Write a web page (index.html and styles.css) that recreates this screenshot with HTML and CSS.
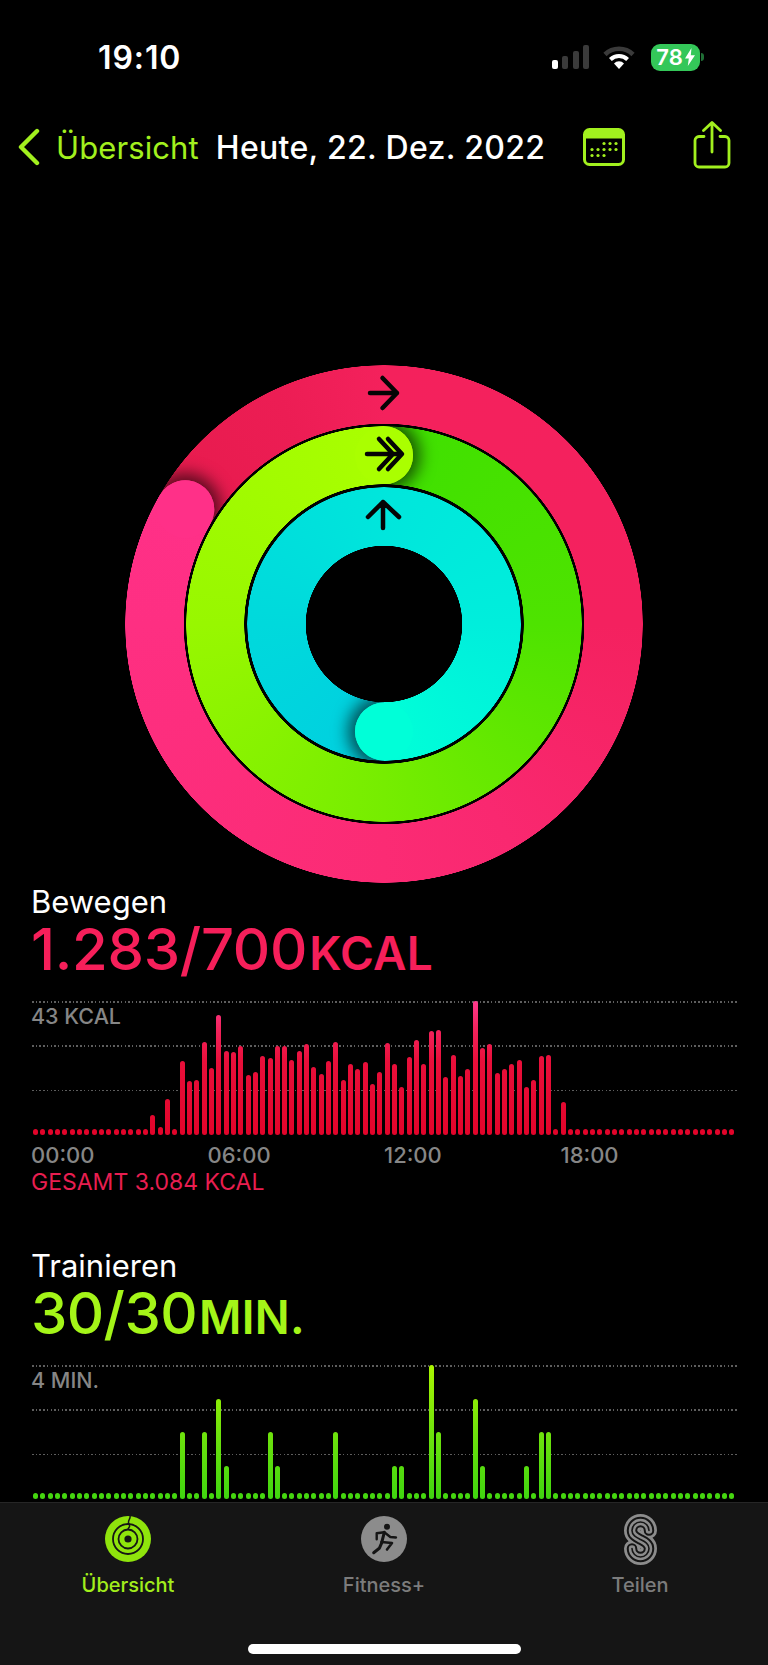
FILE: index.html
```html
<!DOCTYPE html>
<html lang="de">
<head>
  <meta charset="UTF-8" />
  <title>Aktivität</title>
  <link rel="stylesheet" href="styles.css">
</head>
<body>
  <div class="screen">
    <div class="content">
      <!-- Status bar -->
      <div class="status">
        <span class="time">19:10</span>
        <div class="signal">
          <i class="on s1"></i><i class="s2"></i><i class="s3"></i><i class="s4"></i>
        </div>
        <svg class="wifi" viewBox="0 0 32 24">
          <path d="M2 9.5a20 20 0 0 1 28 0" fill="none" stroke="#3a3a3a" stroke-width="4.6"/>
          <path d="M7.4 14.5a12.4 12.4 0 0 1 17.2 0" fill="none" stroke="#fff" stroke-width="4"/>
          <path d="M16 24l-5-5.6a7 7 0 0 1 10 0z" fill="#fff"/>
        </svg>
        <div class="battery">
          <div class="battery-body">
            <span>78</span>
            <svg viewBox="0 0 10 18"><path d="M6.5 0L0 10.400h3.800L2.800 18 10 7.200H5.800z" fill="#fff"/></svg>
          </div>
          <i class="battery-nub"></i>
        </div>
      </div>

      <!-- Nav -->
      <div class="nav">
        <svg class="chevron" viewBox="0 0 22 38"><path d="M19 3L3 19l16 16" fill="none" stroke="#a2f01e" stroke-width="4.4" stroke-linecap="round" stroke-linejoin="round"/></svg>
        <span class="back">Übersicht</span>
        <span class="nav-title">Heute, 22. Dez. 2022</span>
        <svg class="calendar" viewBox="0 0 42 38">
          <rect x="1.500" y="1.500" width="39" height="35" rx="5" fill="none" stroke="#a2f01e" stroke-width="3"/>
          <path d="M1.500 10V6.500a5 5 0 0 1 5-5h29a5 5 0 0 1 5 5V10z" fill="#a2f01e" stroke="#a2f01e"/>
          <g fill="#a2f01e">
            <circle cx="21" cy="15.500" r="1.600"/><circle cx="27" cy="15.500" r="1.600"/><circle cx="33" cy="15.500" r="1.600"/>
            <circle cx="9" cy="21.500" r="1.600"/><circle cx="15" cy="21.500" r="1.600"/><circle cx="21" cy="21.500" r="1.600"/><circle cx="27" cy="21.500" r="1.600"/><circle cx="33" cy="21.500" r="1.600"/>
            <circle cx="9" cy="27.500" r="1.600"/><circle cx="15" cy="27.500" r="1.600"/><circle cx="21" cy="27.500" r="1.600"/>
          </g>
        </svg>
        <svg class="share" viewBox="0 0 38 48">
          <path d="M11 15.500H6a4 4 0 0 0-4 4V42a4 4 0 0 0 4 4h26a4 4 0 0 0 4-4V19.500a4 4 0 0 0-4-4h-5" fill="none" stroke="#a2f01e" stroke-width="2.800" stroke-linecap="round"/>
          <path d="M19 31V2M10.500 9.500L19 1.500l8.500 8" fill="none" stroke="#a2f01e" stroke-width="2.800" stroke-linecap="round" stroke-linejoin="round"/>
        </svg>
      </div>

      <!-- Activity rings -->
      <div class="rings">
        <div class="ring ring-red">
          <div class="ring-base"></div>
          <div class="cap-shadow"></div>
          <div class="ring-top"></div>
          <div class="cap"></div>
        </div>
        <div class="ring ring-green">
          <div class="ring-base"></div>
          <div class="cap-shadow"></div>
          <div class="ring-top"></div>
          <div class="cap"></div>
        </div>
        <div class="ring ring-cyan">
          <div class="ring-base"></div>
          <div class="cap-shadow"></div>
          <div class="ring-top"></div>
          <div class="cap"></div>
        </div>
        <svg class="ring-arrows" viewBox="0 0 518 518">
          <path d="M245 28h27M257.500 13L272 28l-14.500 15"/>
          <path d="M242 89h32M254 74l14 15-14 15M263 74l14 15-14 15"/>
          <path d="M258 163v-26M243 152l15-15 16 15"/>
        </svg>
      </div>

      <!-- Bewegen -->
      <section class="metric move">
        <div class="metric-title">Bewegen</div>
        <div class="metric-value">1.283/700<span class="unit">KCAL</span></div>
        <div class="chart" id="moveChart">
          <div class="chart-grid"><i></i><i></i><i></i></div>
          <span class="chart-label">43 KCAL</span>
          <div class="bars"></div>
        </div>
        <div class="axis">
          <span>00:00</span><span>06:00</span><span>12:00</span><span>18:00</span>
        </div>
        <div class="total">GESAMT 3.084 KCAL</div>
      </section>

      <!-- Trainieren -->
      <section class="metric exercise">
        <div class="metric-title">Trainieren</div>
        <div class="metric-value">30/30<span class="unit">MIN.</span></div>
        <div class="chart" id="exerciseChart">
          <div class="chart-grid"><i></i><i></i><i></i></div>
          <span class="chart-label">4 MIN.</span>
          <div class="bars"></div>
        </div>
      </section>
    </div>

    <!-- Tab bar -->
    <div class="tabbar">
      <div class="tabs">
        <div class="tab active">
          <svg class="tab-icon" viewBox="0 0 46 46">
            <circle cx="23" cy="23" r="23" fill="#8fe40c"/>
            <circle cx="23" cy="23" r="15" fill="none" stroke="#151515" stroke-width="1.800"/>
            <circle cx="23" cy="23" r="9.500" fill="none" stroke="#151515" stroke-width="1.800"/>
            <circle cx="23" cy="23" r="3.600" fill="#151515"/>
            <path d="M25 0c.8 2.500-1.800 4-1.500 6.500.2 1.500 1.500 2.500 1 4-.4 1.200-1.500 1.800-1.500 3" fill="none" stroke="#151515" stroke-width="1.500"/>
          </svg>
          <span>Übersicht</span>
        </div>
        <div class="tab">
          <svg class="tab-icon" viewBox="0 0 46 46">
            <circle cx="23" cy="23" r="23" fill="#8c8c8c"/>
            <circle cx="26" cy="10.700" r="3" fill="#151515"/>
            <path d="M15.700 23.300V17.300L23.300 16.300 29.300 21 35 21.500" fill="none" stroke="#151515" stroke-width="2.400" stroke-linecap="round" stroke-linejoin="round"/>
            <path d="M23.300 16.300L20.500 27.300 18.300 32.300 12.700 36.700" fill="none" stroke="#151515" stroke-width="3" stroke-linecap="round" stroke-linejoin="round"/>
            <path d="M20.500 26L31 27 26 33.500" fill="none" stroke="#151515" stroke-width="2.600" stroke-linecap="round" stroke-linejoin="round"/>
          </svg>
          <span>Fitness+</span>
        </div>
        <div class="tab">
          <svg class="tab-icon share-rings" viewBox="0 0 33 51">
            <defs>
              <path id="sCurve" d="M25 16.500a8.500 8.500 0 0 0-17 0c0 5 4.500 7 8.500 9s8.500 4 8.500 9a8.500 8.500 0 0 1-17 0"/>
            </defs>
            <g fill="none" stroke-linecap="round">
              <use href="#sCurve" stroke="#8c8c8c" stroke-width="16"/>
              <use href="#sCurve" stroke="#151515" stroke-width="10.500"/>
              <use href="#sCurve" stroke="#8c8c8c" stroke-width="6.500"/>
              <use href="#sCurve" stroke="#151515" stroke-width="1.600"/>
            </g>
          </svg>
          <span>Teilen</span>
        </div>
      </div>
      <div class="home-indicator"></div>
    </div>
  </div>
  <script src="chart.js"></script>
</body>
</html>
```

FILE: styles.css
```css
* {
  box-sizing: border-box;
}
body {
  margin: 0;
  background: #000;
  color: #fff;
  font-family: Inter, "Liberation Sans", sans-serif;
}
.screen {
  display: flex;
  flex-direction: column;
  width: 768px;
  height: 1665px;
  overflow: hidden;
}
.content {
  flex: 1;
  min-height: 0;
  overflow: hidden;
}

/* Status bar */
.status {
  display: flex;
  align-items: center;
  height: 114px;
  padding: 0 64px 0 98px;
}
.time {
  font-size: 32px;
  font-weight: 600;
  letter-spacing: 0.9px;
}
.signal {
  display: flex;
  align-items: flex-end;
  gap: 4.500px;
  height: 24px;
  margin-left: auto;
}
.signal i {
  width: 6px;
  border-radius: 2px;
  background: #3a3a3a;
}
.signal .on {
  background: #fff;
}
.s1 { height: 9px; }
.s2 { height: 13px; }
.s3 { height: 18px; }
.s4 { height: 24px; }
.wifi {
  width: 32px;
  height: 24px;
  margin-left: 14px;
}
.battery {
  display: flex;
  align-items: center;
  margin-left: 16px;
}
.battery-body {
  display: flex;
  align-items: center;
  justify-content: center;
  gap: 2px;
  width: 49px;
  height: 27px;
  border-radius: 9px;
  background: #34c759;
  font-size: 22px;
  font-weight: 600;
}
.battery-body svg {
  width: 10px;
  height: 18px;
}
.battery-nub {
  width: 3px;
  height: 8px;
  margin-left: 1px;
  border-radius: 0 3px 3px 0;
  background: #1f6e35;
}

/* Nav */
.nav {
  display: flex;
  align-items: center;
  height: 66px;
  padding-left: 18px;
}
.chevron {
  width: 22px;
  height: 38px;
}
.back {
  margin-left: 16px;
  font-size: 31px;
  letter-spacing: 0.1px;
  color: #a2f01e;
}
.nav-title {
  margin-left: 17px;
  font-size: 32px;
  font-weight: 500;
  letter-spacing: 0.3px;
}
.calendar {
  width: 42px;
  height: 38px;
  margin-left: 38px;
}
.share {
  width: 38px;
  height: 48px;
  margin-left: 68px;
  margin-top: -4px;
}

/* Rings */
.rings {
  display: grid;
  place-items: center;
  width: 518px;
  height: 518px;
  margin: 185px 0 0 125px;
}
.rings > * {
  grid-area: 1 / 1;
}
.ring {
  display: grid;
  place-items: center;
}
.ring > * {
  grid-area: 1 / 1;
}
.ring-base,
.ring-top {
  width: 100%;
  height: 100%;
  border-radius: 50%;
}
.ring-top {
  z-index: 1;
}
.cap,
.cap-shadow {
  border-radius: 50%;
}
.cap {
  z-index: 2;
}
.cap-shadow {
  box-shadow: 0 0 16px 7px rgba(0, 0, 0, 0.62);
}
.ring-red {
  width: 518px;
  height: 518px;
  -webkit-mask: radial-gradient(circle, transparent 200px, #000 200.500px, #000 258.500px, transparent 259px);
  mask: radial-gradient(circle, transparent 200px, #000 200.500px, #000 258.500px, transparent 259px);
}
.ring-red .ring-base {
  background: conic-gradient(#f4215c 0deg, #f4215f 90deg, #f92870 150deg, #fb2b74 180deg, #fe2f82 270deg, #ff3088 300deg, #e71b4d 300deg, #ec1d54 335deg, #f4215c 360deg);
}
.ring-red .ring-top {
  background: conic-gradient(transparent 150deg, #f92870 150deg, #fb2b74 180deg, #fe2f82 270deg, #ff3088 300deg, transparent 300deg);
}
.ring-red .cap,
.ring-red .cap-shadow {
  width: 58px;
  height: 58px;
  background: #ff3088;
  transform: rotate(300deg) translateY(-229.500px);
}
.ring-green {
  width: 396px;
  height: 396px;
  -webkit-mask: radial-gradient(circle, transparent 139.500px, #000 140px, #000 197.500px, transparent 198px);
  mask: radial-gradient(circle, transparent 139.500px, #000 140px, #000 197.500px, transparent 198px);
}
.ring-green .ring-base {
  background: conic-gradient(#3fe000 0deg, #4ee300 90deg, #76ed00 180deg, #98f700 270deg, #aaff00 360deg);
}
.ring-green .ring-top {
  background: conic-gradient(transparent 180deg, #76ed00 180deg, #98f700 270deg, #aaff00 360deg);
}
.ring-green .cap,
.ring-green .cap-shadow {
  width: 57.500px;
  height: 57.500px;
  background: #aaff00;
  transform: translateY(-168.750px);
}
.ring-cyan {
  width: 274px;
  height: 274px;
  -webkit-mask: radial-gradient(circle, transparent 78px, #000 78.500px, #000 136.500px, transparent 137px);
  mask: radial-gradient(circle, transparent 78px, #000 78.500px, #000 136.500px, transparent 137px);
}
.ring-cyan .ring-base {
  background: conic-gradient(#00e6dc 0deg, #00eedc 90deg, #00ffd8 180deg, #00cfe0 180deg, #00d9dc 270deg, #00e6dc 360deg);
}
.ring-cyan .ring-top {
  background: conic-gradient(transparent 90deg, #00eedc 90deg, #00ffd8 180deg, transparent 180deg);
}
.ring-cyan .cap,
.ring-cyan .cap-shadow {
  width: 58px;
  height: 58px;
  background: #00ffd8;
  transform: rotate(180deg) translateY(-107.500px);
}
.ring-arrows {
  z-index: 1;
  width: 518px;
  height: 518px;
  fill: none;
  stroke: #050505;
  stroke-width: 4.500;
  stroke-linecap: round;
  stroke-linejoin: round;
}

/* Metric sections */
.metric {
  padding: 0 31px;
}
.move {
  --accent: #f61f5a;
  --bars: linear-gradient(to top, #e2042a, #e90f3a 55%, #f2245e 80%, #ff3a8e);
  --dot: #e2042a;
}
.exercise {
  --accent: #a4f518;
  --bars: linear-gradient(to top, #3fd60f, #6fe20c 50%, #aaf500);
  --dot: #45d60f;
  margin-top: 54px;
}
.metric-title {
  font-size: 31px;
  line-height: 36px;
}
.metric-value {
  margin-top: 2px;
  font-size: 58px;
  font-weight: 500;
  line-height: 54px;
  letter-spacing: -0.6px;
  color: var(--accent);
}
.move .metric-title {
  margin-top: 1px;
}
.move .metric-value {
  letter-spacing: -0.3px;
}
.unit {
  margin-left: 2px;
  font-size: 46px;
  font-weight: 600;
  letter-spacing: 0.3px;
}
.chart {
  position: relative;
  height: 134px;
  margin: 21px 0 0 1px;
}
.chart-grid {
  display: flex;
  flex-direction: column;
  justify-content: space-between;
  height: 90px;
}
.chart-grid i {
  display: block;
  height: 1.500px;
  background: repeating-linear-gradient(to right, #5e5e5e 0 1.500px, transparent 1.500px 3.700px);
}
.chart-label {
  position: absolute;
  top: 2px;
  left: -1px;
  font-size: 21.500px;
  font-weight: 500;
  color: #868686;
}
.bars {
  position: absolute;
  inset: 0 1.500px 0 1px;
  display: flex;
  align-items: flex-end;
  justify-content: space-between;
}
.bar {
  width: 5px;
  border-radius: 2.500px;
  background: var(--bars) bottom / 100% 134px no-repeat;
}
.bar.dot {
  background: var(--dot);
}
.axis {
  display: grid;
  grid-template-columns: repeat(4, 176.500px);
  margin-top: 8px;
  font-size: 22px;
  font-weight: 500;
  line-height: 24px;
  color: #868686;
}
.total {
  margin-top: 3px;
  font-size: 23px;
  line-height: 24px;
  color: #e81e50;
}

/* Tab bar */
.tabbar {
  height: 163px;
  border-top: 1px solid #262626;
  background: #151515;
}
.tabs {
  display: grid;
  grid-template-columns: repeat(3, 256px);
}
.tab {
  display: flex;
  flex-direction: column;
  align-items: center;
  font-size: 20px;
  font-weight: 500;
  line-height: 24px;
  color: #7c7c7c;
}
.tab-icon {
  width: 46px;
  height: 46px;
  margin: 13px 0 11px;
}
.tab-icon.share-rings {
  width: 33px;
  height: 51px;
  margin: 11px 0 8px;
}
.tab.active {
  color: #a2ee1c;
}
.home-indicator {
  width: 273px;
  height: 10px;
  margin: 47px auto 0;
  border-radius: 5px;
  background: #fff;
}
```

FILE: chart.js
```js
// bar heights in px per 15 minutes, 0 draws the small dot
var moveHeights = [
  0, 0, 0, 0, 0, 0, 0, 0, 0, 0, 0, 0, 0, 0, 0, 0,
  20, 8, 36, 0, 74, 54, 55, 93, 67, 120, 84, 83, 89, 60, 63, 79,
  77, 89, 89, 75, 84, 91, 68, 61, 74, 93, 55, 71, 66, 73, 51, 63,
  92, 71, 48, 78, 95, 71, 104, 105, 58, 80, 59, 66, 134, 87, 91, 62,
  66, 71, 75, 48, 55, 79, 80, 0, 33, 0, 0, 0, 0, 0, 0, 0,
  0, 0, 0, 0, 0, 0, 0, 0, 0, 0, 0, 0, 0, 0, 0, 0
];

// exercise minutes, only the active quarters are listed
var exerciseMinutes = {
  20: 2, 23: 2, 25: 3, 26: 1, 32: 2, 33: 1, 41: 2, 49: 1,
  50: 1, 54: 4, 55: 2, 60: 3, 61: 1, 67: 1, 69: 2, 70: 2
};

function addBar(container, height) {
  var bar = document.createElement('div');
  bar.className = height ? 'bar' : 'bar dot';
  bar.style.height = (height || 6) + 'px';
  container.appendChild(bar);
}

var moveBars = document.querySelector('#moveChart .bars');
moveHeights.forEach(function (height) {
  addBar(moveBars, height);
});

var exerciseBars = document.querySelector('#exerciseChart .bars');
for (var i = 0; i < 96; i++) {
  addBar(exerciseBars, (exerciseMinutes[i] || 0) * 33.5);
}
```
